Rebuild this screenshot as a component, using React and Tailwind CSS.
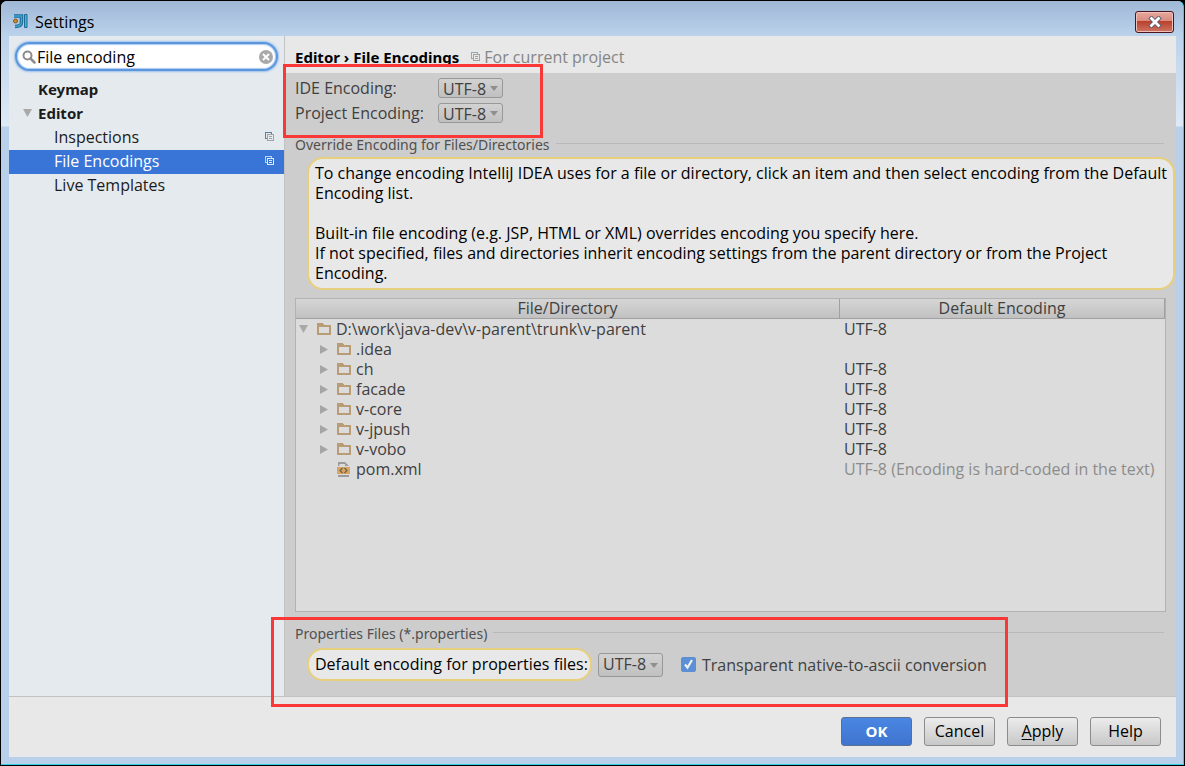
import React from "react";

const FILES = [
  { name: "D:\\work\\java-dev\\v-parent\\trunk\\v-parent", kind: "root", encoding: "UTF-8" },
  { name: ".idea", kind: "dir", encoding: "" },
  { name: "ch", kind: "dir", encoding: "UTF-8" },
  { name: "facade", kind: "dir", encoding: "UTF-8" },
  { name: "v-core", kind: "dir", encoding: "UTF-8" },
  { name: "v-jpush", kind: "dir", encoding: "UTF-8" },
  { name: "v-vobo", kind: "dir", encoding: "UTF-8" },
  { name: "pom.xml", kind: "file", encoding: "UTF-8 (Encoding is hard-coded in the text)" },
];

function ProjectIcon({ className = "", dark = "#5f7f99", light = "#a0a4a6" }) {
  return (
    <svg width="10" height="10" viewBox="0 0 10 10" className={className} shapeRendering="crispEdges" aria-hidden="true">
      <path d="M2 6.5H.5V.5h6V2" fill="none" stroke={dark} />
      <rect x="2.5" y="2.5" width="6" height="6" fill="none" stroke={light} />
      <path d="M4 4.5h3M4 6.5h3" stroke={light} />
    </svg>
  );
}

function DownArrow({ className = "" }) {
  return (
    <svg width="9" height="8" viewBox="0 0 9 8" className={className} aria-hidden="true">
      <path d="M0 0h9L4.500 8z" fill="#a9a9a9" />
    </svg>
  );
}

function RightArrow() {
  return (
    <svg width="8" height="9" viewBox="0 0 8 9" aria-hidden="true">
      <path d="M0 0v9l8-4.500z" fill="#a5a5a5" />
    </svg>
  );
}

function FolderIcon() {
  return (
    <svg width="14" height="12" viewBox="0 0 14 12" shapeRendering="crispEdges" aria-hidden="true">
      <path fillRule="evenodd" d="M0 0h6l1 2h7v10H0zM2 4v6h10V4z" fill="#b99b76" />
    </svg>
  );
}

function XmlIcon() {
  return (
    <svg width="14" height="15" viewBox="0 0 14 15" aria-hidden="true">
      <path d="M1 4V0h7v2H2.500v2zM8 0l4 4H8zM1 13h11v2H1z" fill="#9b9b9b" />
      <path d="M0 5h13v7H0z" fill="#d6a566" />
      <path d="M5.500 6 3 8.500 5.500 11M7.500 6 10 8.500 7.500 11" fill="none" stroke="#75603f" strokeWidth="1.200" />
    </svg>
  );
}

function AppLogo() {
  return (
    <svg width="15" height="15" viewBox="0 0 15 15" aria-hidden="true">
      <path d="M1 2h7.500v6c0 3.500-2 4.500-6.500 4.500" fill="none" stroke="#1f6a94" strokeWidth="3.500" />
      <path d="M1 2h7.500v6c0 3.500-2 4.500-6.500 4.500" fill="none" stroke="#3da5cf" strokeWidth="1.500" />
      <rect x="11" y="0" width="3.500" height="14" rx="1" fill="#1f6a94" />
      <rect x="12" y="1" width="1.500" height="12" fill="#3fb4e0" />
      <circle cx="2.500" cy="7" r="2" fill="#d08a1d" stroke="#7c5a2c" />
    </svg>
  );
}

function EncodingSelect({ id, label, className = "h-5" }) {
  return (
    <span className="relative inline-flex shrink-0">
      <select
        id={id}
        aria-label={label}
        defaultValue="UTF-8"
        className={`${className} w-[65px] appearance-none rounded-[3px] border border-[#989898] bg-linear-to-b from-[#d2d2d2] to-[#c0c0c0] pb-0.5 pl-1 text-[#404040] outline-none`}
      >
        <option>UTF-8</option>
      </select>
      <svg width="8" height="5" viewBox="0 0 8 5" className="pointer-events-none absolute top-1/2 right-[5px] -mt-0.5" aria-hidden="true">
        <path d="M0 0h8L4 5z" fill="#8f8f8f" />
      </svg>
    </span>
  );
}

function SectionTitle({ children }) {
  return (
    <h2 className="mr-3 flex h-5 items-center gap-1.5 font-['Noto_Sans',sans-serif] text-[14px] text-[#505050]">
      {children}
      <span className="mb-1 h-px flex-1 bg-[#b9b9b9]" />
    </h2>
  );
}

function Sidebar() {
  return (
    <aside className="w-[276px] shrink-0 border-r border-[#c2c2c2] bg-[#e5eaee]">
      <div className="px-1.5 pt-1.5">
        <label className="flex h-[29px] items-center gap-px rounded-full border-2 border-[#5a97dd] bg-white pr-[3px] pl-[5px] shadow-[0_0_2px_1px_#9cc1ee,inset_0_0_1px_1px_#a9c9ef]">
          <svg width="14" height="14" viewBox="0 0 14 14" className="shrink-0" aria-hidden="true">
            <circle cx="5.500" cy="5.500" r="4" fill="none" stroke="#8c8c8c" strokeWidth="2" />
            <path d="m8.500 8.500 4 4" stroke="#8c8c8c" strokeWidth="2.500" strokeLinecap="round" />
          </svg>
          <input type="text" aria-label="Search settings" defaultValue="File encoding" className="min-w-0 flex-1 bg-transparent text-black outline-none" />
          <button type="button" aria-label="Clear search" className="shrink-0">
            <svg width="14" height="14" viewBox="0 0 14 14" className="block" aria-hidden="true">
              <circle cx="7" cy="7" r="7" fill="#a9a9a9" />
              <path d="m4 4 6 6m0-6-6 6" stroke="#fff" strokeWidth="2" />
            </svg>
          </button>
        </label>
      </div>
      <nav className="mt-[7px] text-[#1b1b1b]">
        <a href="#keymap" className="flex h-6 items-center pb-0.5 pl-[29px] font-['Noto_Sans',sans-serif] text-[15px] font-bold">Keymap</a>
        <a href="#editor" className="flex h-6 items-center gap-1.5 pb-0.5 pl-3.5 font-['Noto_Sans',sans-serif] text-[15px] font-bold">
          <DownArrow />
          Editor
        </a>
        <a href="#inspections" className="flex h-6 items-center justify-between pr-[9px] pb-0.5 pl-[45px]">
          Inspections
          <ProjectIcon />
        </a>
        <a href="#file-encodings" aria-current="page" className="flex h-6 items-center justify-between bg-[#3875d7] pr-[9px] pb-0.5 pl-[45px] text-white">
          File Encodings
          <ProjectIcon dark="#b7d4f2" light="#e0e8f4" />
        </a>
        <a href="#live-templates" className="flex h-6 items-center pb-0.5 pl-[45px]">Live Templates</a>
      </nav>
    </aside>
  );
}

function FileTable() {
  return (
    <div className="mt-2 mr-2.5 flex-1 border border-[#b2b2b2] bg-[#dcdcdc]">
      <table className="w-full table-fixed border-separate border-spacing-0 text-[#404040]">
        <thead>
          <tr className="bg-linear-to-b from-[#d6d6d6] to-[#c0c0c0] leading-[19px]">
            <th scope="col" className="w-[62.6%] border-r border-b border-[#a0a0a0] p-0 font-normal">File/Directory</th>
            <th scope="col" className="border-r border-b border-[#a0a0a0] p-0 font-normal">Default Encoding</th>
          </tr>
        </thead>
        <tbody>
          {FILES.map((file) => (
            <tr key={file.name} className="h-5">
              <td className="p-0">
                {file.kind === "root" ? (
                  <span className="flex items-center pl-[3px]">
                    <DownArrow className="mr-[9px]" />
                    <FolderIcon />
                    <span className="ml-[5px]">{file.name}</span>
                  </span>
                ) : (
                  <span className="flex items-center pl-6">
                    <span className="flex w-[17px]">{file.kind === "dir" && <RightArrow />}</span>
                    {file.kind === "dir" ? <FolderIcon /> : <XmlIcon />}
                    <span className="ml-[5px]">{file.name}</span>
                  </span>
                )}
              </td>
              <td className={file.kind === "file" ? "p-0 pl-1 whitespace-nowrap text-[#8c8c8c]" : "p-0 pl-1"}>{file.encoding}</td>
            </tr>
          ))}
        </tbody>
      </table>
    </div>
  );
}

function FooterButton({ children, primary = false }) {
  return (
    <button
      type="button"
      className={
        primary
          ? "h-[29px] w-[71px] rounded-[3px] border border-[#5a7090] bg-linear-to-b from-[#4a86e4] to-[#3f74cf] text-[15px] font-bold text-white"
          : "h-[29px] w-[71px] rounded-[3px] border border-[#8c8c8c] bg-linear-to-b from-[#ececec] to-[#c8c8c8] text-black"
      }
    >
      {children}
    </button>
  );
}

export default function App() {
  return (
    <div className="relative flex min-h-screen flex-col bg-black p-px font-['Open_Sans','Noto_Sans',sans-serif] text-[16px] leading-5">
      <div className="flex flex-1 flex-col rounded-t-md border-r border-b border-[#2fd0e4] bg-[#bad1eb] bg-[linear-gradient(#9fb8d6,#bcd3ec_36px,#dfe9f6_125px,#b9d0ea_126px)] pr-[7px] pb-[7px] pl-2">
        <header className="flex h-[35px] items-center justify-between pt-1.5 pl-1">
          <h1 className="flex items-center gap-[7px] text-black">
            <AppLogo />
            Settings
          </h1>
          <button type="button" aria-label="Close" className="mr-0.5 flex h-[22px] w-[39px] items-center justify-center rounded-[3px] border border-[#4a1420] bg-[linear-gradient(#e6a99f,#d98b7e_45%,#b9402c_46%,#cf7463)] shadow-[inset_0_0_0_1px_#efc0b8]">
            <svg width="14" height="12" viewBox="0 0 14 12" aria-hidden="true">
              <path d="m3.500 2.500 7 7m0-7-7 7" stroke="#54596a" strokeWidth="4.500" strokeLinecap="square" />
              <path d="m3.500 2.500 7 7m0-7-7 7" stroke="#fff" strokeWidth="2.800" strokeLinecap="square" />
            </svg>
          </button>
        </header>

        <div className="flex flex-1">
          <Sidebar />
          <main className="flex min-w-0 flex-1 flex-col bg-[#cdcdcd]">
            <div className="flex h-[37px] items-center bg-[#e8e8e8] pt-1 pl-2.5">
              <h2 className="font-['Noto_Sans',sans-serif] text-[15px] font-bold text-black">Editor › File Encodings</h2>
              <ProjectIcon className="mr-[3px] ml-3" dark="#93a7b5" light="#a3a3a3" />
              <span className="text-[#858585]">For current project</span>
            </div>

            <div className="flex flex-1 flex-col pt-[5px] pl-2.5">
              <div className="grid grid-cols-[143px_auto] justify-start gap-y-[5px] text-[#404040]">
                <label htmlFor="ide">IDE Encoding:</label>
                <EncodingSelect id="ide" label="IDE Encoding" />
                <label htmlFor="project">Project Encoding:</label>
                <EncodingSelect id="project" label="Project Encoding" />
              </div>

              <div className="mt-3">
                <SectionTitle>Override Encoding for Files/Directories</SectionTitle>
              </div>
              <div className="mt-0.5 mr-px ml-3 rounded-[16px] border-2 border-[#e8cf7c] bg-[#e8e8e8] pt-1 pb-[5px] pl-1.5 text-black">
                <p>
                  To change encoding IntelliJ IDEA uses for a file or directory, click an item and then select encoding from the Default
                  <br />
                  Encoding list.
                </p>
                <p className="mt-5">Built-in file encoding (e.g. JSP, HTML or XML) overrides encoding you specify here.</p>
                <p>
                  If not specified, files and directories inherit encoding settings from the parent directory or from the Project
                  <br />
                  Encoding.
                </p>
              </div>

              <FileTable />

              <div className="mt-3">
                <SectionTitle>Properties Files (*.properties)</SectionTitle>
              </div>
              <div className="mt-1 mb-[15px] ml-3 flex items-center text-[#404040]">
                <label htmlFor="properties" className="flex h-[33px] w-[285px] items-center rounded-[16px] border-2 border-[#e8cf7c] bg-[#e8e8e8] pb-0.5 pl-1.5 whitespace-nowrap text-black">
                  Default encoding for properties files:
                </label>
                <span className="ml-1.5 flex">
                  <EncodingSelect id="properties" label="Default encoding for properties files" className="h-6" />
                </span>
                <label className="ml-[18px] flex items-center gap-1.5">
                  <span className="grid">
                    <input type="checkbox" defaultChecked className="peer col-start-1 row-start-1 size-[15px] appearance-none rounded-xs border border-[#5f8fd0] bg-[#5b8fd6]" />
                    <svg width="15" height="15" viewBox="0 0 15 15" className="pointer-events-none invisible col-start-1 row-start-1 peer-checked:visible" aria-hidden="true">
                      <path d="m4 7.500 2.500 3L11 3" fill="none" stroke="#f0f0f0" strokeWidth="2.200" />
                    </svg>
                  </span>
                  Transparent native-to-ascii conversion
                </label>
              </div>
            </div>
          </main>
        </div>

        <footer className="flex h-[61px] items-center justify-end gap-3 border-t border-[#c2c2c2] bg-[#e8e8e8] pt-2.5 pr-[15px] pb-0.5">
          <FooterButton primary>OK</FooterButton>
          <FooterButton>Cancel</FooterButton>
          <FooterButton>
            <span className="underline underline-offset-2">A</span>pply
          </FooterButton>
          <FooterButton>Help</FooterButton>
        </footer>
      </div>

      <div className="pointer-events-none absolute top-[64px] left-[283px] h-[74px] w-[260px] border-[3px] border-[#fb3838]" />
      <div className="pointer-events-none absolute bottom-[59px] left-[271px] h-[90px] w-[737px] border-[3px] border-[#fb3838]" />
    </div>
  );
}
